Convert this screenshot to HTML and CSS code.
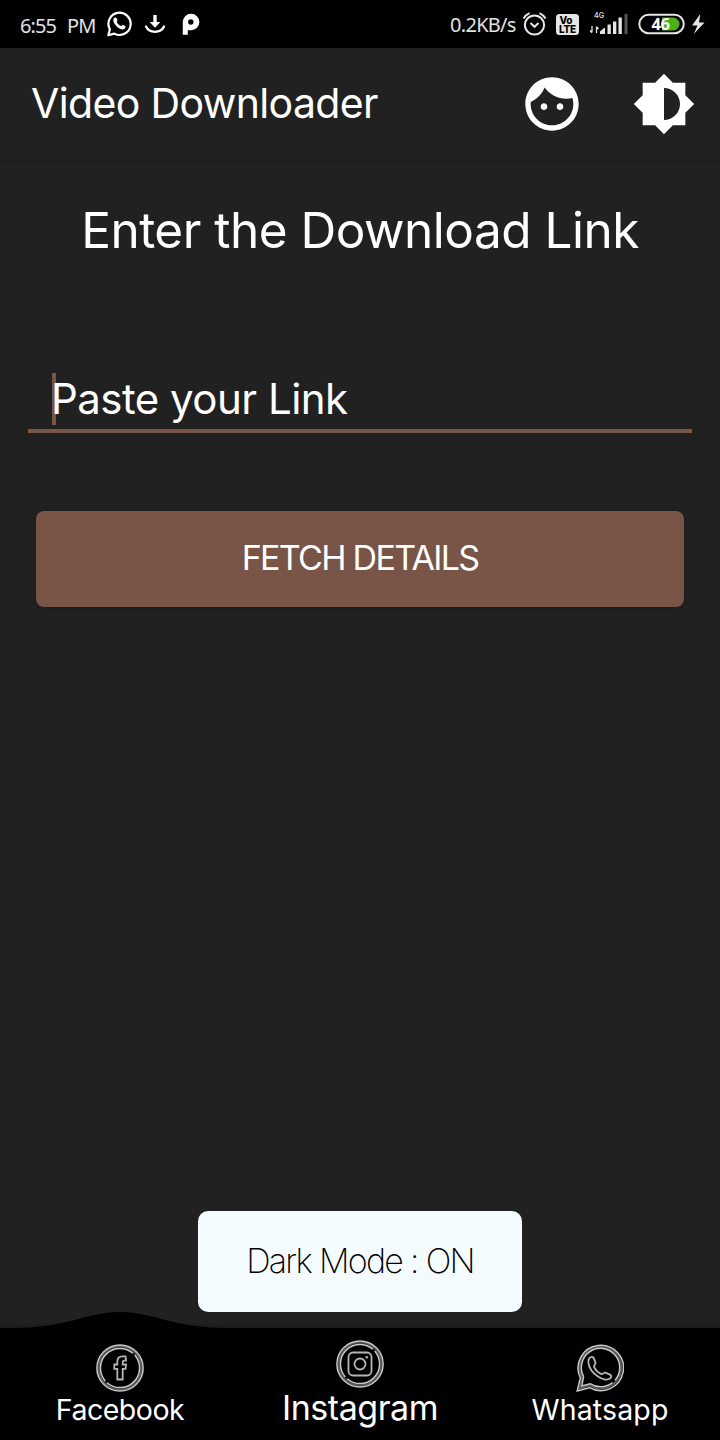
FILE: index.html
```html
<!DOCTYPE html>
<html lang="en">
<head>
<meta charset="utf-8">
<title>Video Downloader</title>
<link rel="stylesheet" href="styles.css">
</head>
<body>
<div class="screen">
  <div class="status">
    <span class="clock"><span>6:55</span><span>PM</span></span>
    <svg class="status-left" width="96" height="30" viewBox="106 9 96 30">
      <path d="M108.300 35.300l1.600-6a11.100 11.100 0 1 1 4.400 4.300z" fill="none" stroke="#fff" stroke-width="2.200" stroke-linejoin="round"/>
      <path d="M114.800 17.500c.9-.3 1.500 0 1.800.7l.9 2.100c.2.6-.9 1.500-.7 1.900 1 1.900 2.400 3 4.300 3.900.5.2 1.200-1.500 1.900-1.200l2.200 1.100c.8.5.1 2.500-.9 3.100-2.100 1.200-5.700-.7-7.800-2.800-2-2-3.800-4.900-3.100-7 .2-.8.7-1.500 1.400-1.800z" fill="#fff"/>
      <path d="M155 15v9" stroke="#fff" stroke-width="3.400"/>
      <path d="M149.600 22h10.800l-5.400 5.800z" fill="#fff"/>
      <path d="M146 26.500c2 4.200 5.200 5.300 9 5.300s7-1.100 9-5.300" fill="none" stroke="#fff" stroke-width="2.300" stroke-linecap="round"/>
      <path fill-rule="evenodd" d="M182.800 34.700V22a8.300 8.300 0 1 1 8.300 8.300h-3.300v4.400zM190.800 19.300a2.700 2.700 0 1 0 0 5.400 2.700 2.700 0 0 0 0-5.400z" fill="#fff"/>
    </svg>
    <span class="speed">0.2KB/s</span>
    <svg class="status-right" width="186" height="30" viewBox="522 9 186 30">
      <g fill="none" stroke="#e6e6e6" stroke-width="2">
        <circle cx="534.500" cy="25" r="9.600"/>
        <path d="M523.500 18.500a14 14 0 0 1 6-5.300M545.500 18.500a14 14 0 0 0-6-5.300M530.500 23l4 3.800 4-3.800"/>
      </g>
      <rect x="556" y="14" width="23" height="21" rx="3.500" fill="#e6e6e6"/>
      <text x="559.500" y="23.500" class="volte" textLength="13">Vo</text>
      <text x="559" y="33" class="volte" textLength="17">LTE</text>
      <text x="594" y="18" class="net" textLength="10" lengthAdjust="spacingAndGlyphs">4G</text>
      <path d="M592 26v6.500M590 30.500l2 2.300M596.500 33v-6.500M598.500 29l-2-2.300" stroke="#e6e6e6" stroke-width="1.300" fill="none"/>
      <path d="M600 34v-2.500l4-3.500h1v6zM607.500 24.500h3.300V34h-3.300zM613 21.500h3.300V34H613zM618.500 17.500h3.300V34h-3.300z" fill="#e6e6e6"/>
      <path d="M624.500 14h3v20h-3z" fill="#555"/>
      <path d="M662 17.500h11a6.500 6.500 0 0 1 0 13h-11z" fill="#4db21a"/>
      <rect x="639.300" y="14.700" width="44.500" height="18.600" rx="9.300" fill="none" stroke="#e6e6e6" stroke-width="2"/>
      <text x="651.500" y="30" class="battery" textLength="18.500">46</text>
      <path d="M700.300 14l-8.300 11.500h5.500l-3.700 8.500 10.700-11.500H699z" fill="#e6e6e6"/>
    </svg>
  </div>

  <header class="bar">
    <h1 class="title">Video Downloader</h1>
    <svg class="action" viewBox="0 0 24 24"><path d="M9 11.750c-.69 0-1.250.56-1.250 1.250s.56 1.250 1.250 1.250 1.250-.56 1.250-1.250-.56-1.250-1.250-1.250zm6 0c-.69 0-1.250.56-1.250 1.250s.56 1.250 1.250 1.250 1.250-.56 1.250-1.250-.56-1.250-1.250-1.250zM12 2C6.480 2 2 6.480 2 12s4.480 10 10 10 10-4.480 10-10S17.520 2 12 2zm0 18c-4.410 0-8-3.590-8-8 0-.29.02-.58.05-.86 2.360-1.050 4.230-2.980 5.210-5.370C11.070 8.330 14.050 10 17.420 10c.78 0 1.530-.09 2.250-.26.21.71.33 1.470.33 2.260 0 4.410-3.590 8-8 8z"/></svg>
    <svg class="action" viewBox="0 0 24 24"><path d="M20 15.310L23.310 12 20 8.690V4h-4.690L12 .69 8.690 4H4v4.690L.69 12 4 15.310V20h4.690L12 23.310 15.310 20H20v-4.690zM12 18V6c3.310 0 6 2.690 6 6s-2.690 6-6 6z"/></svg>
  </header>

  <main class="content">
    <h2 class="heading">Enter the Download Link</h2>
    <div class="field"><span class="caret"></span><span class="hint">Paste your Link</span></div>
    <button class="fetch" type="button">FETCH DETAILS</button>
    <div class="toast">Dark Mode : ON</div>
  </main>

  <nav class="nav">
    <svg class="bump" width="240" height="17" viewBox="0 0 240 17"><path d="M0 17v-1h20C72 14 88 0 120 0s48 14 100 16h20v1z"/></svg>
    <a class="tab">
      <svg class="tab-icon" viewBox="0 0 48 48">
        <circle cx="24" cy="24" r="21.400" class="dim"/><circle cx="24" cy="24" r="23.100"/><circle cx="24" cy="24" r="19.600" pathLength="100" stroke-dasharray="36.500 2 48 2 11.500"/>
        <path d="M29.500 12.300h-3c-3.500 0-5.200 2-5.200 5.200v3h-3v4.300h3v10.700h5.400V24.800h2.800l.6-4.300h-3.400v-2.200c0-1.100.5-1.700 1.600-1.700h1.700z" class="glyph"/>
      </svg>
      <span class="label facebook">Facebook</span>
    </a>
    <a class="tab active">
      <svg class="tab-icon" viewBox="0 0 48 48">
        <circle cx="24" cy="24" r="21.400" class="dim"/><circle cx="24" cy="24" r="23.100"/><circle cx="24" cy="24" r="19.600" pathLength="100" stroke-dasharray="36.500 2 48 2 11.500"/>
        <rect x="12.500" y="12.500" width="23" height="23" rx="4.500" class="glyph"/><circle cx="24" cy="24" r="5.500" class="glyph"/><circle cx="30.700" cy="17.300" r=".5" class="glyph"/>
      </svg>
      <span class="label instagram">Instagram</span>
    </a>
    <a class="tab">
      <svg class="tab-icon" viewBox="0 0 48 48">
        <path d="M6 33.200L3.600 44.400 13.700 41.500A20.800 20.800 0 1 0 6 33.200z" class="dim"/>
        <path d="M4.300 33.800L1.200 47 13.500 43.700A22.700 22.700 0 1 0 4.300 33.800z"/>
        <path d="M7.600 32.600L5.800 42 14 39.700A19.200 19.200 0 0 0 36.500 38.700M39 36.200A19.200 19.200 0 1 0 7.600 32.600"/>
        <path d="M14.500 13.200c1.600-.8 3 0 3.500 1.400l1.500 4c.5 1.800-2 2.700-1.500 4 1.300 3.400 4 6 7.500 7.500 1.300.5 2.300-2 4-1.500l4.500 2c1.500.7 1.700 2.200.5 3.500-2.300 2.300-7.500 2-12.500-1.500-5-3.500-9-9-9.500-13.500-.3-2.500.3-5.100 2-5.900z" class="glyph"/>
      </svg>
      <span class="label whatsapp">Whatsapp</span>
    </a>
  </nav>
</div>
</body>
</html>
```
FILE: styles.css
```css
* { box-sizing: border-box; }
body { margin: 0; background: #212121; font-family: Inter, "Liberation Sans", sans-serif; font-weight: 400; color: #fff; }
.screen { width: 720px; height: 1440px; display: flex; flex-direction: column; overflow: hidden; background: #212121; }
h1, h2 { margin: 0; font-weight: 400; }
span { white-space: nowrap; }

.status { height: 48px; flex: none; display: flex; align-items: center; background: #000; padding: 0 12px 0 20px; color: #e2e2e2; font-family: "Noto Sans", sans-serif; font-size: 20px; font-weight: 400; }
.clock { width: 86px; display: flex; gap: 11px; letter-spacing: -0.9px; padding-top: 2px; }
.speed { width: 72px; margin-left: 248px; letter-spacing: -0.7px; padding-top: 1px; }
.volte { font: 800 10px Inter, sans-serif; fill: #000; }
.net { font: 500 8px Inter, sans-serif; fill: #e6e6e6; }
.battery { font: 700 16.5px "Noto Sans", sans-serif; fill: #fff; }

.bar { height: 112px; flex: none; display: flex; align-items: center; padding: 0 24px 0 31px; box-shadow: 0 1px 2px rgba(0, 0, 0, .14); }
.title { flex: 1; font-size: 41px; line-height: 50px; padding-bottom: 2px; letter-spacing: -0.63px; white-space: nowrap; }
.action { width: 64px; height: 64px; fill: #fff; }
.action + .action { margin-left: 48px; }

.content { flex: 1; display: flex; flex-direction: column; align-items: center; padding-bottom: 16px; }
.heading { margin-top: 40px; height: 60px; line-height: 60px; font-size: 49.5px; letter-spacing: -0.5px; }
.field { width: 664px; height: 60px; margin-top: 113px; border-bottom: 4px solid #795548; padding-left: 24px; display: flex; }
.caret { width: 4px; height: 52px; background: #795548; }
.hint { font-size: 42px; line-height: 52px; letter-spacing: -0.52px; margin-left: -5px; }
.fetch { width: 648px; height: 96px; margin-top: 78px; padding: 0 0 3px; border: 0; border-radius: 8px; background: #795548; color: #fff; font: 400 34px Inter, sans-serif; letter-spacing: -1.7px; box-shadow: 0 1px 3px rgba(0, 0, 0, .2); }
.toast { width: 324px; height: 101px; margin-top: auto; border-radius: 10px; background: #f5fcff; color: #000; text-align: center; font-size: 34px; font-weight: 200; line-height: 99px; letter-spacing: -1.7px; }

.nav { position: relative; height: 112px; flex: none; display: grid; grid-template-columns: repeat(3, 1fr); background: #000; box-shadow: 0 -1px 4px rgba(0, 0, 0, .35); }
.bump { position: absolute; left: 0; top: -16px; fill: #000; }
.tab { display: flex; flex-direction: column; align-items: center; padding-top: 16px; }
.tab.active { padding-top: 12px; }
.tab-icon { width: 48px; height: 48px; fill: none; stroke: #c8c8c8; stroke-width: 1.5; }
.tab-icon .dim { stroke: #5a5a5a; stroke-width: 2; }
.tab-icon .glyph { stroke: #b5b5b5; stroke-width: 1.8; }
.label { font-size: 28.5px; line-height: 36px; }
.facebook { letter-spacing: -0.5px; }
.instagram { font-size: 34px; line-height: 39px; letter-spacing: -0.45px; }
.whatsapp { letter-spacing: 0.15px; }
```
